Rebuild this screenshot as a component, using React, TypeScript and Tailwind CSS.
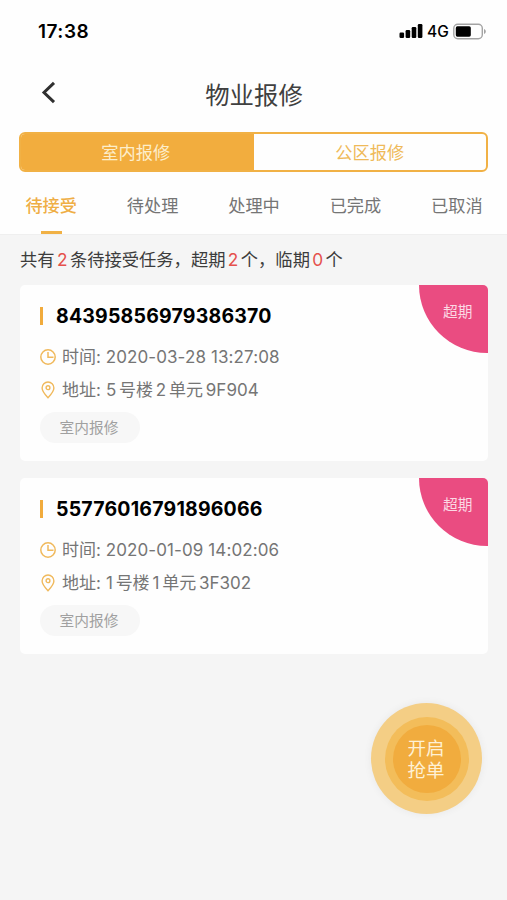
import { useState } from 'react'

type Task = {
  id: string
  time: string
  address: string[]
  type: string
  overdue: boolean
}

const TYPES = ['室内报修', '公区报修']
const STATUSES = ['待接受', '待处理', '处理中', '已完成', '已取消']

const TASKS: Task[] = [
  {
    id: '84395856979386370',
    time: '2020-03-28 13:27:08',
    address: ['5', '号楼', '2', '单元', '9F904'],
    type: '室内报修',
    overdue: true,
  },
  {
    id: '55776016791896066',
    time: '2020-01-09 14:02:06',
    address: ['1', '号楼', '1', '单元', '3F302'],
    type: '室内报修',
    overdue: true,
  },
]

function StatusBar() {
  return (
    <div className="flex h-[62px] items-center justify-between pl-[38px] pr-[20px] text-black">
      <span className="text-[19px] font-semibold leading-none tracking-[0.5px]">17:38</span>
      <div className="flex items-center">
        <svg className="h-[16px] w-[24px]" viewBox="0 0 24 16" fill="currentColor">
          <rect x="0.5" y="9.5" width="4.6" height="5.5" rx="1.2" />
          <rect x="6.6" y="7" width="4.6" height="8" rx="1.2" />
          <rect x="12.7" y="4" width="4.6" height="11" rx="1.2" />
          <rect x="18.8" y="1" width="4.6" height="14" rx="1.2" />
        </svg>
        <span className="ml-[4px] mt-[2px] w-[22px] text-[15.5px] font-medium leading-none">4G</span>
        <svg className="ml-[4px] h-[17px] w-[34px]" viewBox="0 0 34 17" fill="none">
          <rect x="0.8" y="1.3" width="28.5" height="14.4" rx="4" stroke="#a3a3a3" strokeWidth="1.4" />
          <rect x="2.8" y="3.3" width="15" height="10.4" rx="1.6" fill="#000" />
          <path d="M31 6v5c1.2-.5 1.8-1.5 1.8-2.5S32.200 6.500 31 6z" fill="#a3a3a3" />
        </svg>
      </div>
    </div>
  )
}

function ClockIcon() {
  return (
    <svg className="h-4 w-4" viewBox="0 0 16 16" fill="none" stroke="#f0b95c" strokeWidth="1.5">
      <circle cx="8" cy="8" r="7.2" />
      <path d="M8 3v5.300h5.500" />
    </svg>
  )
}

function PinIcon() {
  return (
    <svg className="h-[18px] w-4" viewBox="0 0 16 18" fill="none" stroke="#f0b95c" strokeWidth="1.4">
      <path d="M8 16.700C5 13.500 2.100 10.300 2.100 6.900a5.900 5.900 0 0111.800 0c0 3.400-2.900 6.600-5.900 9.800z" />
      <circle cx="8" cy="6.700" r="1.900" />
    </svg>
  )
}

function TaskCard({ task }: { task: Task }) {
  return (
    <div className="relative h-[176px] overflow-hidden rounded-[5px] bg-[#fefefe] pl-[20px] pt-[20px]">
      {task.overdue && (
        <div className="absolute right-0 top-0 h-[68px] w-[69px] rounded-bl-full bg-[#ea4c81] pl-[24px] pt-[17px] text-[14.7px] leading-[20px] text-[#fbd9e4]">
          超期
        </div>
      )}
      <div className="flex h-[24px] items-center">
        <span className="mb-[2px] h-[18px] w-[3px] bg-[#f1ab3c]" />
        <span className="ml-[13px] text-[19.5px] font-bold tracking-[0.2px] text-black">{task.id}</span>
      </div>
      <div className="mt-[16px] flex h-[24px] items-center text-[17px] text-[#757575]">
        <ClockIcon />
        <span className="ml-[6px] mt-px">
          时间: <span className="tracking-[0.1px]">{task.time}</span>
        </span>
      </div>
      <div className="mt-[9px] flex h-[24px] items-center text-[17px] text-[#757575]">
        <PinIcon />
        <span className="ml-[6px] mt-px">地址:</span>
        <span className="ml-[5px] mt-px flex gap-[2.8px]">
          {task.address.map((part, i) => (
            <span key={i}>{part}</span>
          ))}
        </span>
      </div>
      <div className="mt-[10px] flex h-[31px] w-[100px] items-center justify-center rounded-full bg-[#f7f7f7] pr-[2px] pt-px text-[14.7px] text-[#a0a0a0]">
        {task.type}
      </div>
    </div>
  )
}

export default function App() {
  const [type, setType] = useState(0)
  const [status, setStatus] = useState(0)

  return (
    <div className="relative h-[900px] w-full overflow-hidden bg-[#f5f5f5] font-['Inter','Noto_Sans_CJK_SC',sans-serif]">
      <div className="h-[235px] border-b border-[#efefef] bg-[#fefefe]">
        <StatusBar />
        <div className="relative flex h-[64px] items-center justify-center">
          <button className="absolute left-[41px] top-[19px]">
            <svg className="h-[23px] w-[15px]" viewBox="0 0 15 23" fill="none" stroke="#303030" strokeWidth="3">
              <path d="M13 1.800L3 11.500l10 9.700" />
            </svg>
          </button>
          <h1 className="pl-px pt-[2px] text-[24.4px] leading-none text-[#404040]">物业报修</h1>
        </div>
        <div className="mx-[19px] mt-[6px] grid h-[40px] grid-cols-2 overflow-hidden rounded-[6px] border-2 border-[#f1b145]">
          {TYPES.map((name, i) => (
            <button
              key={name}
              onClick={() => setType(i)}
              className={`pt-px text-[17.2px] ${i === type ? 'bg-[#f2ad3e] pr-[3px] text-[#fdeecb]' : 'text-[#efba59]'}`}
            >
              {name}
            </button>
          ))}
        </div>
        <div className="flex h-[62px]">
          {STATUSES.map((name, i) => (
            <button
              key={name}
              onClick={() => setStatus(i)}
              className={`flex flex-1 flex-col items-center justify-between pl-px pt-[21px] text-[17.2px] leading-[26px] ${
                i === status ? 'font-medium text-[#efae45]' : 'text-[#757575]'
              }`}
            >
              {name}
              {i === status && <span className="h-[3px] w-[21px] bg-[#f1b145]" />}
            </button>
          ))}
        </div>
      </div>

      <p className="flex h-[50px] items-center pl-[20px] text-[17.3px] text-[#3c3c3c]">
        共有<span className="mx-[2.4px] text-[#e5504c]">2</span>条待接受任务，超期
        <span className="mx-[2.4px] text-[#e5504c]">2</span>个，临期
        <span className="mx-[2.4px] text-[#e5504c]">0</span>个
      </p>

      <div className="ml-[20px] mr-[19px] flex flex-col gap-[17px]">
        {TASKS.map((task) => (
          <TaskCard key={task.id} task={task} />
        ))}
      </div>

      <button className="absolute left-[371px] top-[703px] flex h-[111px] w-[111px] items-center justify-center rounded-full bg-[#f4ce85] shadow-[0_0_8px_rgba(0,0,0,0.06)]">
        <span className="flex h-[84px] w-[84px] items-center justify-center rounded-full bg-[#f3bd5a]">
          <span className="flex h-[68px] w-[68px] items-center justify-center rounded-full bg-[#f1ac3e] pr-px pt-px text-[18.5px] leading-[22px] text-[#fef1d5]">
            开启
            <br />
            抢单
          </span>
        </span>
      </button>
    </div>
  )
}
